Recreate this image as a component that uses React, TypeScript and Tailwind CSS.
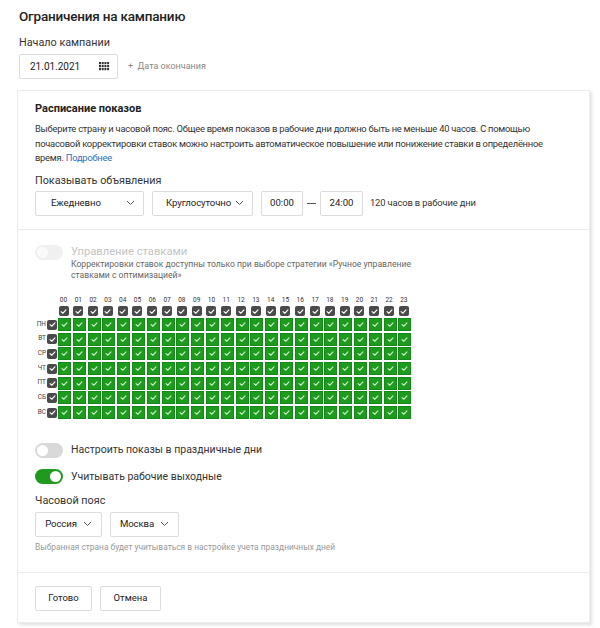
import React from "react";

const hours = Array.from({ length: 24 }, (_, i) => String(i).padStart(2, "0"));
const days = ["ПН", "ВТ", "СР", "ЧТ", "ПТ", "СБ", "ВС"];

function Check({ color = "#fff", size = 7 }: { color?: string; size?: number }) {
  return (
    <svg width={size} height={size} viewBox="0 0 10 10" fill="none">
      <path d="M1.5 5.2 L4 7.5 L8.5 2.8" stroke={color} strokeWidth="1.6" strokeLinecap="round" strokeLinejoin="round" />
    </svg>
  );
}

function Chevron() {
  return (
    <svg width="9" height="6" viewBox="0 0 9 6" fill="none">
      <path d="M1 1 L4.5 4.5 L8 1" stroke="#555" strokeWidth="1" />
    </svg>
  );
}

function DarkBox() {
  return (
    <div className="w-[10px] h-[10px] rounded-[2px] bg-[#4a4a4a] flex items-center justify-center">
      <Check color="#fff" size={7} />
    </div>
  );
}

function Toggle({ on, disabled }: { on?: boolean; disabled?: boolean }) {
  return (
    <div
      className={
        "w-[28px] h-[15px] rounded-full flex items-center px-[2px] " +
        (on ? "bg-[#1f9a1f] justify-end" : disabled ? "bg-[#f0f0f0] justify-start" : "bg-[#d9d9d9] justify-start")
      }
    >
      <div className={"w-[11px] h-[11px] rounded-full " + (disabled ? "bg-[#fafafa]" : "bg-white")} />
    </div>
  );
}

function Select({ label, cls }: { label: string; cls: string }) {
  return (
    <div className={"h-[25px] border border-[#dcdcdc] rounded-[2px] flex items-center text-[9.6px] tracking-[-0.1px] text-[#222] " + cls}>
      <span>{label}</span>
      <Chevron />
    </div>
  );
}

export default function App() {
  return (
    <div className="w-[600px] h-[628px] bg-white text-[#222] overflow-hidden" style={{ fontFamily: 'Roboto, "Liberation Sans", sans-serif' }}>
      <div className="px-[19px] pt-[6px]">
        <div className="text-[13.5px] font-medium leading-[20px] tracking-[-0.2px]">Ограничения на кампанию</div>
        <div className="mt-[10px] text-[10.8px] leading-[14px] text-[#333]">Начало кампании</div>
        <div className="mt-[4px] flex items-center">
          <div className="w-[99px] h-[25px] border border-[#dcdcdc] rounded-[2px] flex items-center justify-between pl-[10px] pr-[7px] text-[10px]">
            <span>21.01.2021</span>
            <svg width="11" height="9" viewBox="0 0 11 9">
              {[0, 1, 2].map((r) =>
                [0, 1, 2, 3].map((c) => (
                  <rect key={r + "-" + c} x={c * 2.7} y={r * 3} width="2" height="2.2" fill="#333" />
                ))
              )}
            </svg>
          </div>
          <span className="ml-[10px] text-[9px] text-[#888]">+&nbsp; Дата окончания</span>
        </div>
      </div>

      <div className="mx-[17px] mt-[11px] w-[573px] h-[533px] bg-white border border-[#ececec] shadow-[2px_2px_3px_rgba(0,0,0,0.12)]">
        <div className="px-[17px] pt-[10px] h-[139px] border-b border-[#ececec]">
          <div className="text-[11px] font-bold leading-[16px]">Расписание показов</div>
          <div className="mt-[5px] text-[9.4px] leading-[14.5px] text-[#333] tracking-[-0.25px] whitespace-nowrap">
            Выберите страну и часовой пояс. Общее время показов в рабочие дни должно быть не меньше 40 часов. С помощью
            <br />
            почасовой корректировки ставок можно настроить автоматическое повышение или понижение ставки в определённое
            <br />
            время. <span className="text-[#2a70c8]">Подробнее</span>
          </div>
          <div className="mt-[8px] text-[10.8px] leading-[14px] text-[#333]">Показывать объявления</div>
          <div className="mt-[3px] flex items-center gap-[8px]">
            <Select label="Ежедневно" cls="w-[109px] pl-[15px] pr-[8px] justify-between" />
            <Select label="Круглосуточно" cls="w-[101px] pl-[13px] pr-[8px] justify-between" />
            <div className="flex items-center">
              <div className="w-[42px] h-[25px] border border-[#dcdcdc] rounded-[2px] flex items-center justify-center text-[9.6px]">00:00</div>
              <div className="w-[17px] flex justify-center"><div className="w-[9px] h-[1px] bg-[#555]" /></div>
              <div className="w-[43px] h-[25px] border border-[#dcdcdc] rounded-[2px] flex items-center justify-center text-[9.6px]">24:00</div>
            </div>
            <span className="text-[9.4px] text-[#333] -ml-[1px] tracking-[-0.15px]">120 часов в рабочие дни</span>
          </div>
        </div>

        <div className="px-[17px] pt-[14px] h-[343px] border-b border-[#ececec]">
          <div className="flex items-start gap-[8px]">
            <div className="mt-[1px]"><Toggle disabled /></div>
            <div>
              <div className="text-[11.2px] leading-[15px] text-[#c4c4c4]">Управление ставками</div>
              <div className="text-[8.6px] leading-[11px] text-[#666] whitespace-nowrap">
                Корректировки ставок доступны только при выборе стратегии «Ручное управление
                <br />
                ставками с оптимизацией»
              </div>
            </div>
          </div>

          <div className="mt-[15px] ml-[22px]">
            <div className="flex gap-[1.8px]">
              {hours.map((h) => (
                <div key={h} className="w-[13px] flex flex-col items-center">
                  <span className="text-[6.5px] leading-[8px] text-[#333]">{h}</span>
                  <div className="mt-[2px]"><DarkBox /></div>
                </div>
              ))}
            </div>
            <div className="mt-[2px] flex flex-col gap-[1.7px] -ml-[22px]">
              {days.map((d) => (
                <div key={d} className="flex items-center h-[13px]">
                  <span className="w-[11px] text-[6.5px] text-[#444] text-right">{d}</span>
                  <div className="ml-[1px]"><DarkBox /></div>
                  <div className="ml-[1px] flex gap-[1.8px]">
                    {hours.map((h) => (
                      <div key={h} className="w-[13px] h-[13px] bg-[#1c9b1c] border border-[#15881a] flex items-center justify-center">
                        <Check color="#cdeecd" size={7} />
                      </div>
                    ))}
                  </div>
                </div>
              ))}
            </div>
          </div>

          <div className="mt-[23px] flex items-center gap-[8px]">
            <Toggle />
            <span className="text-[10.5px] text-[#333]">Настроить показы в праздничные дни</span>
          </div>
          <div className="mt-[11px] flex items-center gap-[8px]">
            <Toggle on />
            <span className="text-[10.5px] text-[#333]">Учитывать рабочие выходные</span>
          </div>
          <div className="mt-[9px] text-[10.8px] leading-[14px] text-[#333]">Часовой пояс</div>
          <div className="mt-[4px] flex gap-[8px]">
            <Select label="Россия" cls="w-[67px] justify-center gap-[6px]" />
            <Select label="Москва" cls="w-[69px] justify-center gap-[6px]" />
          </div>
          <div className="mt-[4px] text-[8.4px] text-[#999]">Выбранная страна будет учитываться в настройке учета праздничных дней</div>
        </div>

        <div className="px-[17px] pt-[13px] flex gap-[8px]">
          <div className="w-[57px] h-[25px] border border-[#dcdcdc] rounded-[2px] flex items-center justify-center text-[9.5px]">Готово</div>
          <div className="w-[61px] h-[25px] border border-[#dcdcdc] rounded-[2px] flex items-center justify-center text-[9.5px]">Отмена</div>
        </div>
      </div>
    </div>
  );
}
